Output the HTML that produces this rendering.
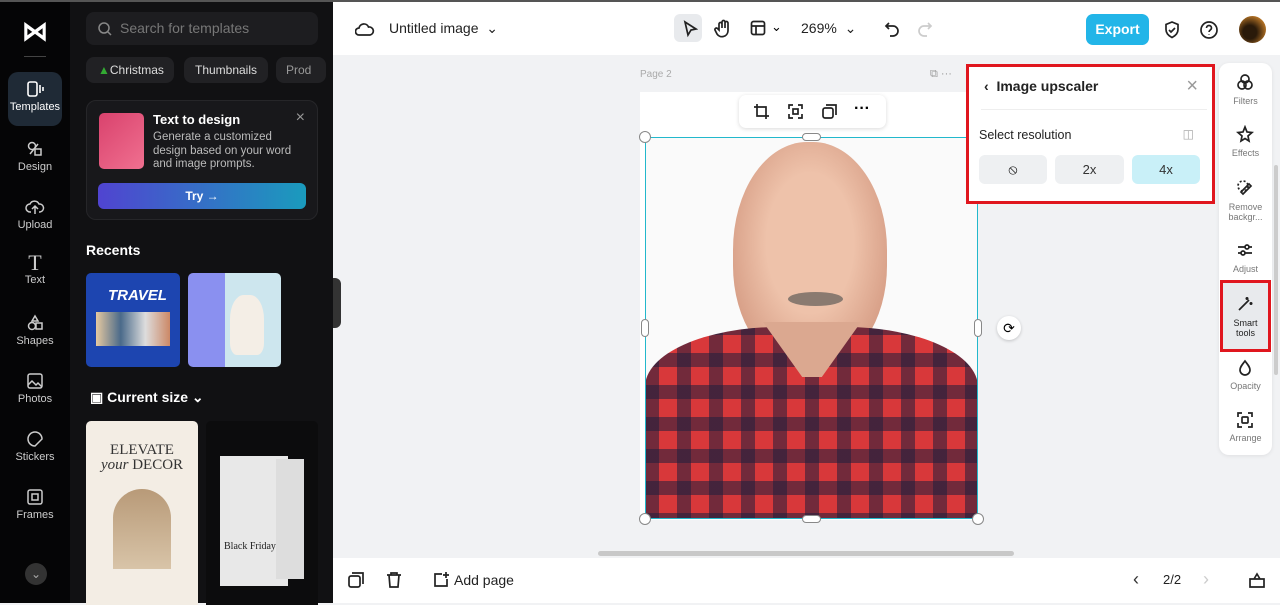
<!DOCTYPE html>
<html><head><style>
*{box-sizing:border-box;margin:0;padding:0}
body{width:1280px;height:603px;overflow:hidden;font-family:"Liberation Sans",sans-serif;background:#f1f2f4;position:relative}
.abs{position:absolute}
.rail{left:0;top:0;width:70px;height:603px;background:#050506;border-top:2px solid #555}
.rail .it{position:absolute;left:8px;width:54px;height:56px;color:#ccc;font-size:11px;text-align:center}
.rail .it svg{display:block;margin:8px auto 3px}
.panel{left:70px;top:0;width:263px;height:603px;background:#111113;border-top:2px solid #555}
.chip{position:absolute;top:55px;height:26px;border-radius:8px;background:#212124;color:#ddd;font-size:12px;line-height:26px;padding:0 10px}
.top{left:333px;top:0;width:947px;height:55px;background:#fff;border-top:2px solid #555}
.bot{left:333px;top:558px;width:947px;height:45px;background:#fff}
.ico{position:absolute;stroke:#222;fill:none;stroke-width:1.7}
.rt{left:1219px;top:63px;width:53px;height:392px;background:#fff;border-radius:10px;box-shadow:0 1px 4px rgba(0,0,0,.08)}
.rt .t{position:absolute;left:0;width:53px;text-align:center;font-size:9px;color:#777;line-height:10px}
</style></head><body>
<div class="abs rail">
 <div style="position:absolute;left:22px;top:14px;color:#fff;font-size:26px;font-weight:bold">&#8904;</div>
 <div style="position:absolute;left:24px;top:54px;width:22px;height:1px;background:#444"></div>
 <div class="it" style="top:70px;background:#1f2a36;border-radius:10px;color:#fff;height:54px"><svg width="18" height="18" viewBox="0 0 18 18" stroke="#fff" fill="none" stroke-width="1.6"><rect x="2" y="2" width="9" height="14" rx="2"/><path d="M14 5v8M17 7v4"/></svg>Templates</div>
 <div class="it" style="top:130px"><svg width="18" height="18" viewBox="0 0 18 18" stroke="#ccc" fill="none" stroke-width="1.5"><circle cx="6" cy="6" r="3.5"/><rect x="9" y="9" width="6" height="6"/><path d="M4 14l8-10"/></svg>Design</div>
 <div class="it" style="top:188px"><svg width="20" height="18" viewBox="0 0 20 18" stroke="#ccc" fill="none" stroke-width="1.5"><path d="M6 14H5a4 4 0 010-8 5 5 0 019 0 4 4 0 011 8h-1M10 16V8M7 11l3-3 3 3"/></svg>Upload</div>
 <div class="it" style="top:246px"><div style="font-size:22px;font-family:'Liberation Serif';margin-top:4px;line-height:22px">T</div>Text</div>
 <div class="it" style="top:304px"><svg width="18" height="18" viewBox="0 0 18 18" stroke="#ccc" fill="none" stroke-width="1.5"><path d="M9 2l3 5H6z"/><circle cx="6" cy="12" r="3.5"/><rect x="10" y="9" width="6" height="6"/></svg>Shapes</div>
 <div class="it" style="top:362px"><svg width="18" height="18" viewBox="0 0 18 18" stroke="#ccc" fill="none" stroke-width="1.5"><rect x="2" y="2" width="14" height="14" rx="2"/><path d="M2 13l4-4 4 4 2-2 4 4"/></svg>Photos</div>
 <div class="it" style="top:420px"><svg width="18" height="18" viewBox="0 0 18 18" stroke="#ccc" fill="none" stroke-width="1.5"><path d="M16 9A7 7 0 109 16l7-7z"/></svg>Stickers</div>
 <div class="it" style="top:478px"><svg width="18" height="18" viewBox="0 0 18 18" stroke="#ccc" fill="none" stroke-width="1.5"><rect x="2" y="2" width="14" height="14" rx="2"/><rect x="6" y="6" width="6" height="6"/></svg>Frames</div>
 <div style="position:absolute;left:25px;top:561px;width:22px;height:22px;border-radius:50%;background:#333;color:#aaa;font-size:12px;text-align:center;line-height:22px">&#8964;</div>
</div>
<div class="abs panel">
 <div style="position:absolute;left:16px;top:10px;width:232px;height:33px;border-radius:8px;background:#1d1d20;color:#777;font-size:14px;line-height:33px;padding-left:34px">Search for templates
  <svg style="position:absolute;left:12px;top:10px" width="14" height="14" viewBox="0 0 14 14" stroke="#888" fill="none" stroke-width="1.5"><circle cx="6" cy="6" r="5"/><path d="M10 10l3 3"/></svg></div>
 <div class="chip" style="left:16px;padding-left:12px"><span style="color:#3a3">▲</span>Christmas</div>
 <div class="chip" style="left:114px;width:84px;text-align:center">Thumbnails</div>
 <div class="chip" style="left:206px;width:50px;color:#999">Prod</div>
 <div style="position:absolute;left:16px;top:98px;width:232px;height:120px;border-radius:10px;background:#18181b;border:1px solid #262629">
  <div style="position:absolute;left:12px;top:12px;width:45px;height:56px;border-radius:5px;background:linear-gradient(135deg,#d9426d,#f07090)"></div>
  <div style="position:absolute;left:66px;top:11px;color:#fff;font-size:13px;font-weight:bold">Text to design</div>
  <div style="position:absolute;left:66px;top:30px;color:#bbb;font-size:11.5px;line-height:13.5px;width:150px">Generate a customized design based on your word and image prompts.</div>
  <div style="position:absolute;right:12px;top:8px;color:#999;font-size:16px">×</div>
  <div style="position:absolute;left:11px;top:82px;width:208px;height:26px;border-radius:6px;background:linear-gradient(90deg,#5044d0,#1a9bbd);color:#fff;font-size:12px;font-weight:bold;text-align:center;line-height:26px">Try →</div>
 </div>
 <div style="position:absolute;left:16px;top:240px;color:#fff;font-size:14px;font-weight:bold">Recents</div>
 <div style="position:absolute;left:16px;top:271px;width:94px;height:94px;border-radius:5px;background:#1d45b0"><div style="color:#fff;font-size:15px;font-weight:bold;font-style:italic;margin:14px 0 0 22px">TRAVEL</div><div style="margin:8px 10px;height:34px;background:linear-gradient(90deg,#e6c9a0,#4a6a8a,#ddd,#c86)"></div></div>
 <div style="position:absolute;left:118px;top:271px;width:93px;height:94px;border-radius:5px;background:linear-gradient(90deg,#8a90f0 40%,#cde6ee 40%)"><div style="position:absolute;left:42px;top:22px;width:34px;height:60px;border-radius:40% 40% 20% 20%;background:#f4eee6"></div></div>
 <div style="position:absolute;left:20px;top:387px;color:#fff;font-size:14px;font-weight:bold">▣ Current size ⌄</div>
 <div style="position:absolute;left:16px;top:419px;width:112px;height:184px;border-radius:5px 5px 0 0;background:#f3ede4"><div style="text-align:center;font-family:'Liberation Serif';font-size:15px;color:#333;margin-top:22px;line-height:15px">ELEVATE<br><i>your</i> DECOR</div><div style="margin:16px auto;width:58px;height:80px;border-radius:29px 29px 0 0;background:linear-gradient(#b89a78,#d8c4a8)"></div></div>
 <div style="position:absolute;left:136px;top:419px;width:112px;height:184px;border-radius:5px 5px 0 0;background:#0c0c0d"><div style="position:absolute;left:14px;top:35px;width:68px;height:130px;background:#e8e8e8"></div><div style="position:absolute;left:70px;top:38px;width:28px;height:120px;background:#ddd"></div><div style="position:absolute;left:18px;top:120px;font-family:'Liberation Serif';font-size:10px;color:#222">Black Friday</div></div>
</div>
<div class="abs" style="left:333px;top:278px;width:8px;height:50px;background:#333;border-radius:0 6px 6px 0"></div>
<div class="abs top">
 <svg class="ico" style="left:22px;top:19px" width="20" height="16" viewBox="0 0 20 16"><path d="M5 14H4a3.5 3.5 0 010-7 5 5 0 019.5-1A4 4 0 0115 14z"/></svg>
 <div style="position:absolute;left:56px;top:18px;font-size:14px;color:#222">Untitled image &nbsp;⌄</div>
 <div style="position:absolute;left:341px;top:12px;width:28px;height:28px;border-radius:6px;background:#e8eaed"></div>
 <svg class="ico" style="left:349px;top:18px" width="16" height="18" viewBox="0 0 16 18"><path d="M3 2l11 7-5 1-3 5z"/></svg>
 <svg class="ico" style="left:381px;top:17px" width="18" height="20" viewBox="0 0 18 20"><path d="M5 11V5a1.5 1.5 0 013 0v4V3a1.5 1.5 0 013 0v6V4a1.5 1.5 0 013 0v8a6 6 0 01-11 3l-2-4a1.5 1.5 0 012.5-1.5z"/></svg>
 <svg class="ico" style="left:417px;top:18px" width="16" height="16" viewBox="0 0 16 16"><rect x="1.5" y="1.5" width="13" height="13" rx="2"/><path d="M1.5 6h13M6 6v8.5"/></svg>
 <div style="position:absolute;left:438px;top:17px;font-size:13px">⌄</div>
 <div style="position:absolute;left:468px;top:18px;font-size:14px;color:#222">269% &nbsp;⌄</div>
 <svg class="ico" style="left:551px;top:19px" width="16" height="16" viewBox="0 0 16 16"><path d="M5 2L2 5l3 3M2 5h7a5 5 0 010 10H6"/></svg>
 <svg class="ico" style="left:584px;top:19px;stroke:#ccc" width="16" height="16" viewBox="0 0 16 16"><path d="M11 2l3 3-3 3M14 5H7a5 5 0 000 10h3"/></svg>
 <div style="position:absolute;left:753px;top:12px;width:63px;height:31px;border-radius:7px;background:#22b5e8;color:#fff;font-weight:bold;font-size:14px;text-align:center;line-height:31px">Export</div>
 <svg class="ico" style="left:830px;top:18px" width="18" height="20" viewBox="0 0 18 20"><path d="M9 2l6 2.5v5c0 4-3 6.5-6 8-3-1.5-6-4-6-8v-5z M6 10l2 2 4-4"/></svg>
 <svg class="ico" style="left:866px;top:18px" width="20" height="20" viewBox="0 0 20 20"><circle cx="10" cy="10" r="8"/><path d="M7.5 8a2.5 2.5 0 115 0c0 2-2.5 2-2.5 4M10 14.5v.5"/></svg>
 <div style="position:absolute;left:906px;top:14px;width:27px;height:27px;border-radius:50%;background:radial-gradient(circle at 40% 60%,#2a1a0a 30%,#c8802a 80%)"></div>
</div>
<div class="abs" style="left:640px;top:69px;font-size:10px;color:#aaa">Page 2</div>
<div class="abs" style="left:930px;top:68px;font-size:11px;color:#999">⧉ ···</div>
<div class="abs" style="left:640px;top:92px;width:338px;height:428px;background:#fff"></div>
<!-- photo -->
<div class="abs" style="left:645px;top:137px;width:333px;height:382px;overflow:hidden;background:#fafafa">
 <div style="position:absolute;left:88px;top:5px;width:154px;height:225px;border-radius:48% 48% 45% 45%;background:radial-gradient(ellipse at 50% 45%,#eec2aa 40%,#d8a088 75%,#b88068)"></div>
 <div style="position:absolute;left:143px;top:155px;width:55px;height:14px;border-radius:50%;background:#8a7a70"></div>
 <div style="position:absolute;left:0;top:190px;width:333px;height:200px;border-radius:40% 40% 0 0/30% 30% 0 0;background:
 repeating-linear-gradient(90deg,rgba(30,30,60,.55) 0 14px,transparent 14px 32px),
 repeating-linear-gradient(0deg,rgba(30,30,60,.55) 0 14px,transparent 14px 32px),#d8383a"></div>
 <div style="position:absolute;left:118px;top:185px;width:98px;height:55px;background:#dba890;clip-path:polygon(0 0,100% 0,60% 100%,40% 100%)"></div>
</div>
<div class="abs" style="left:645px;top:137px;width:333px;height:382px;border:1.5px solid #22b8cc"></div>
<div class="abs" style="left:639px;top:131px;width:12px;height:12px;border-radius:50%;background:#fff;border:1px solid #888"></div>
<div class="abs" style="left:972px;top:131px;width:12px;height:12px;border-radius:50%;background:#fff;border:1px solid #888"></div>
<div class="abs" style="left:639px;top:513px;width:12px;height:12px;border-radius:50%;background:#fff;border:1px solid #888"></div>
<div class="abs" style="left:972px;top:513px;width:12px;height:12px;border-radius:50%;background:#fff;border:1px solid #888"></div>
<div class="abs" style="left:802px;top:133px;width:19px;height:8px;border-radius:4px;background:#fff;border:1px solid #888"></div>
<div class="abs" style="left:802px;top:515px;width:19px;height:8px;border-radius:4px;background:#fff;border:1px solid #888"></div>
<div class="abs" style="left:641px;top:319px;width:8px;height:18px;border-radius:4px;background:#fff;border:1px solid #888"></div>
<div class="abs" style="left:974px;top:319px;width:8px;height:18px;border-radius:4px;background:#fff;border:1px solid #888"></div>
<div class="abs" style="left:997px;top:316px;width:24px;height:24px;border-radius:50%;background:#fff;box-shadow:0 1px 3px rgba(0,0,0,.2);text-align:center;line-height:24px;font-size:14px">⟳</div>
<div class="abs" style="left:739px;top:95px;width:147px;height:33px;background:#fff;border-radius:7px;box-shadow:0 1px 4px rgba(0,0,0,.15)">
 <svg class="ico" style="left:15px;top:9px" width="15" height="15" viewBox="0 0 15 15"><path d="M3 0v12h12M0 3h12v12"/></svg>
 <svg class="ico" style="left:49px;top:9px" width="15" height="15" viewBox="0 0 15 15"><path d="M1 5V1h4M10 1h4v4M14 10v4h-4M5 14H1v-4"/><rect x="5" y="5" width="5" height="5"/></svg>
 <svg class="ico" style="left:83px;top:9px" width="15" height="15" viewBox="0 0 15 15"><rect x="1" y="4" width="10" height="10" rx="2"/><path d="M4 1h10v10"/></svg>
 <div style="position:absolute;left:115px;top:5px;font-size:16px;font-weight:bold">···</div>
</div>
<!-- upscaler -->
<div class="abs" style="left:966px;top:64px;width:249px;height:140px;background:#fff;border:3px solid #e0161e">
 <div style="position:absolute;left:15px;top:11px;font-size:14px;font-weight:bold;color:#222">‹&nbsp; Image upscaler</div>
 <div style="position:absolute;right:14px;top:8px;font-size:20px;color:#999">×</div>
 <div style="position:absolute;left:12px;top:42px;width:226px;height:1px;background:#eee"></div>
 <div style="position:absolute;left:10px;top:61px;font-size:12.5px;color:#222">Select resolution</div>
 <div style="position:absolute;right:18px;top:60px;font-size:12px;color:#aaa">◫</div>
 <div style="position:absolute;left:10px;top:88px;width:68px;height:29px;border-radius:6px;background:#eef0f2;text-align:center;line-height:29px;font-size:14px">⦸</div>
 <div style="position:absolute;left:86px;top:88px;width:69px;height:29px;border-radius:6px;background:#eef0f2;text-align:center;line-height:29px;font-size:13px;color:#333">2x</div>
 <div style="position:absolute;left:163px;top:88px;width:68px;height:29px;border-radius:6px;background:#c9f0f8;text-align:center;line-height:29px;font-size:13px;color:#333">4x</div>
</div>
<div class="abs rt">
 <svg class="ico" style="left:17px;top:10px" width="18" height="18" viewBox="0 0 18 18"><circle cx="9" cy="6" r="4"/><circle cx="6" cy="12" r="4"/><circle cx="12" cy="12" r="4"/></svg>
 <div class="t" style="top:33px">Filters</div>
 <svg class="ico" style="left:17px;top:62px" width="18" height="18" viewBox="0 0 18 18"><path d="M9 2l2 5 5 .5-4 3.5 1 5-4-2.5-4 2.5 1-5-4-3.5 5-.5z"/></svg>
 <div class="t" style="top:85px">Effects</div>
 <svg class="ico" style="left:17px;top:116px" width="18" height="18" viewBox="0 0 18 18"><path d="M5 13l8-8 2 2-8 8z" /><circle cx="7" cy="7" r="5" stroke-dasharray="2 2"/></svg>
 <div class="t" style="top:139px">Remove<br>backgr...</div>
 <svg class="ico" style="left:17px;top:178px" width="18" height="18" viewBox="0 0 18 18"><path d="M2 6h14M2 12h14"/><circle cx="11" cy="6" r="2" fill="#fff"/><circle cx="7" cy="12" r="2" fill="#fff"/></svg>
 <div class="t" style="top:201px">Adjust</div>
 <div style="position:absolute;left:4px;top:220px;width:45px;height:66px;background:#e8eaed;outline:3px solid #e0161e"></div>
 <svg class="ico" style="left:17px;top:231px" width="18" height="18" viewBox="0 0 18 18"><path d="M3 16l10-10M11 3v3M9.5 4.5h3M15 8v3M13.5 9.5h3"/></svg>
 <div class="t" style="top:255px;color:#222">Smart<br>tools</div>
 <svg class="ico" style="left:18px;top:296px" width="16" height="18" viewBox="0 0 16 18"><path d="M8 2c3 4 5 6 5 9a5 5 0 01-10 0c0-3 2-5 5-9z"/></svg>
 <div class="t" style="top:318px">Opacity</div>
 <svg class="ico" style="left:17px;top:348px" width="18" height="18" viewBox="0 0 18 18"><path d="M2 6V2h4M12 2h4v4M16 12v4h-4M6 16H2v-4"/><rect x="6" y="6" width="6" height="6" rx="1"/></svg>
 <div class="t" style="top:370px">Arrange</div>
</div>
<div class="abs" style="left:1274px;top:165px;width:4px;height:210px;background:#ccc;border-radius:2px"></div>
<div class="abs" style="left:598px;top:551px;width:416px;height:5px;background:#c8c8c8;border-radius:3px"></div>
<div class="abs bot">
 <svg class="ico" style="left:15px;top:14px" width="16" height="16" viewBox="0 0 16 16"><rect x="1" y="4" width="11" height="11" rx="2"/><path d="M4 1h11v11"/></svg>
 <svg class="ico" style="left:53px;top:13px" width="16" height="17" viewBox="0 0 16 17"><path d="M1 4h14M5 4V2h6v2M3 4l1 12h8l1-12"/></svg>
 <svg class="ico" style="left:100px;top:13px" width="17" height="17" viewBox="0 0 17 17"><path d="M14 8v7H2V3h7M13 1v6M10 4h6"/></svg>
 <div style="position:absolute;left:121px;top:14px;font-size:14px;color:#222">Add page</div>
 <div style="position:absolute;left:800px;top:11px;font-size:18px;color:#333">‹</div>
 <div style="position:absolute;left:830px;top:14px;font-size:13px;color:#222">2/2</div>
 <div style="position:absolute;left:870px;top:11px;font-size:18px;color:#ccc">›</div>
 <svg class="ico" style="left:915px;top:13px" width="18" height="18" viewBox="0 0 18 18"><path d="M2 8h14v8H2zM6 8l3-5 3 5"/></svg>
</div>
</body></html>
